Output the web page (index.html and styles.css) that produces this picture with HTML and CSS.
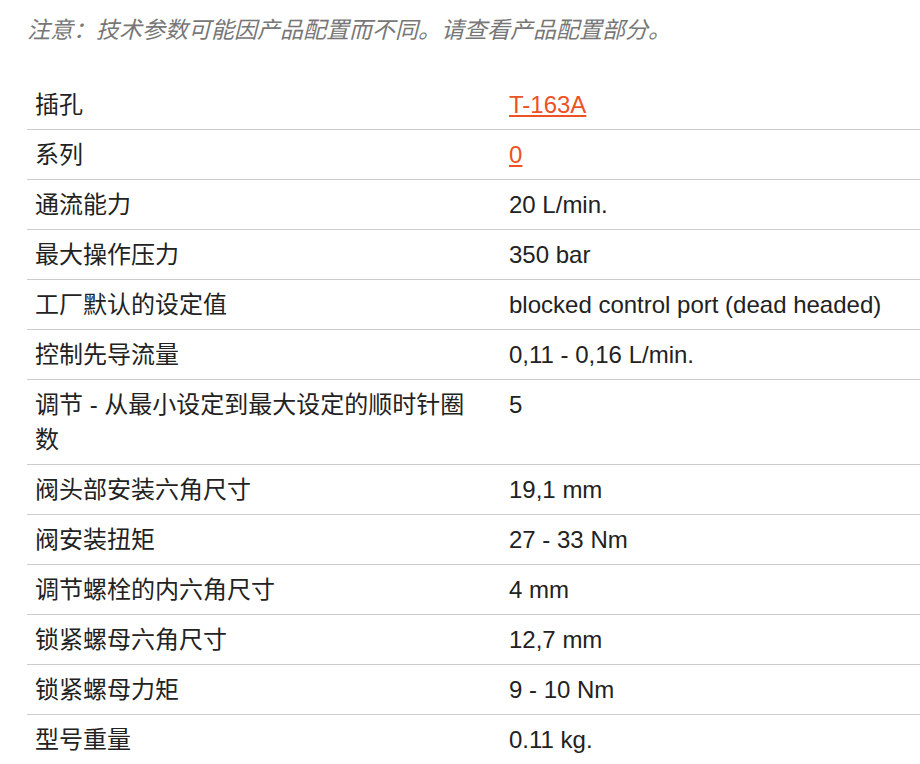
FILE: index.html
```html
<!DOCTYPE html>
<html lang="zh">
<head>
<meta charset="utf-8">
<link rel="stylesheet" href="styles.css">
</head>
<body>
<p class="note">注意：技术参数可能因产品配置而不同。请查看产品配置部分。</p>
<table class="specs">
<tbody>
<tr><td class="k">插孔</td><td class="v"><a href="#">T-163A</a></td></tr>
<tr><td class="k">系列</td><td class="v"><a href="#">0</a></td></tr>
<tr><td class="k">通流能力</td><td class="v">20 L/min.</td></tr>
<tr><td class="k">最大操作压力</td><td class="v">350 bar</td></tr>
<tr><td class="k">工厂默认的设定值</td><td class="v">blocked control port (dead headed)</td></tr>
<tr><td class="k">控制先导流量</td><td class="v">0,11 - 0,16 L/min.</td></tr>
<tr><td class="k">调节 - 从最小设定到最大设定的顺时针圈数</td><td class="v">5</td></tr>
<tr><td class="k">阀头部安装六角尺寸</td><td class="v">19,1 mm</td></tr>
<tr><td class="k">阀安装扭矩</td><td class="v">27 - 33 Nm</td></tr>
<tr><td class="k">调节螺栓的内六角尺寸</td><td class="v">4 mm</td></tr>
<tr><td class="k">锁紧螺母六角尺寸</td><td class="v">12,7 mm</td></tr>
<tr><td class="k">锁紧螺母力矩</td><td class="v">9 - 10 Nm</td></tr>
<tr><td class="k">型号重量</td><td class="v">0.11 kg.</td></tr>
</tbody>
</table>
</body>
</html>
```
FILE: styles.css
```css
html, body {
  margin: 0;
  padding: 0;
  background: #fff;
}
body {
  font-family: "Liberation Sans", Arial, "Noto Sans CJK SC", sans-serif;
  color: #222;
  overflow: hidden;
}
.note {
  margin: 0;
  padding: 14px 0 0 27px;
  height: 80px;
  box-sizing: border-box;
  font-size: 23px;
  line-height: 32px;
  font-style: italic;
  color: #777;
}
.specs {
  margin: 0 0 0 27px;
  width: 893px;
  border-collapse: collapse;
  font-size: 24px;
  line-height: 35px;
}
.specs td {
  padding: 7px 8px;
  border-bottom: 1px solid #ccc;
  vertical-align: top;
  text-align: left;
}
.specs tr:last-child td {
  border-bottom: none;
}
.specs .k {
  width: 446px;
  padding-right: 20px;
}
.specs a {
  color: #ee5124;
  text-decoration: underline;
}
```
